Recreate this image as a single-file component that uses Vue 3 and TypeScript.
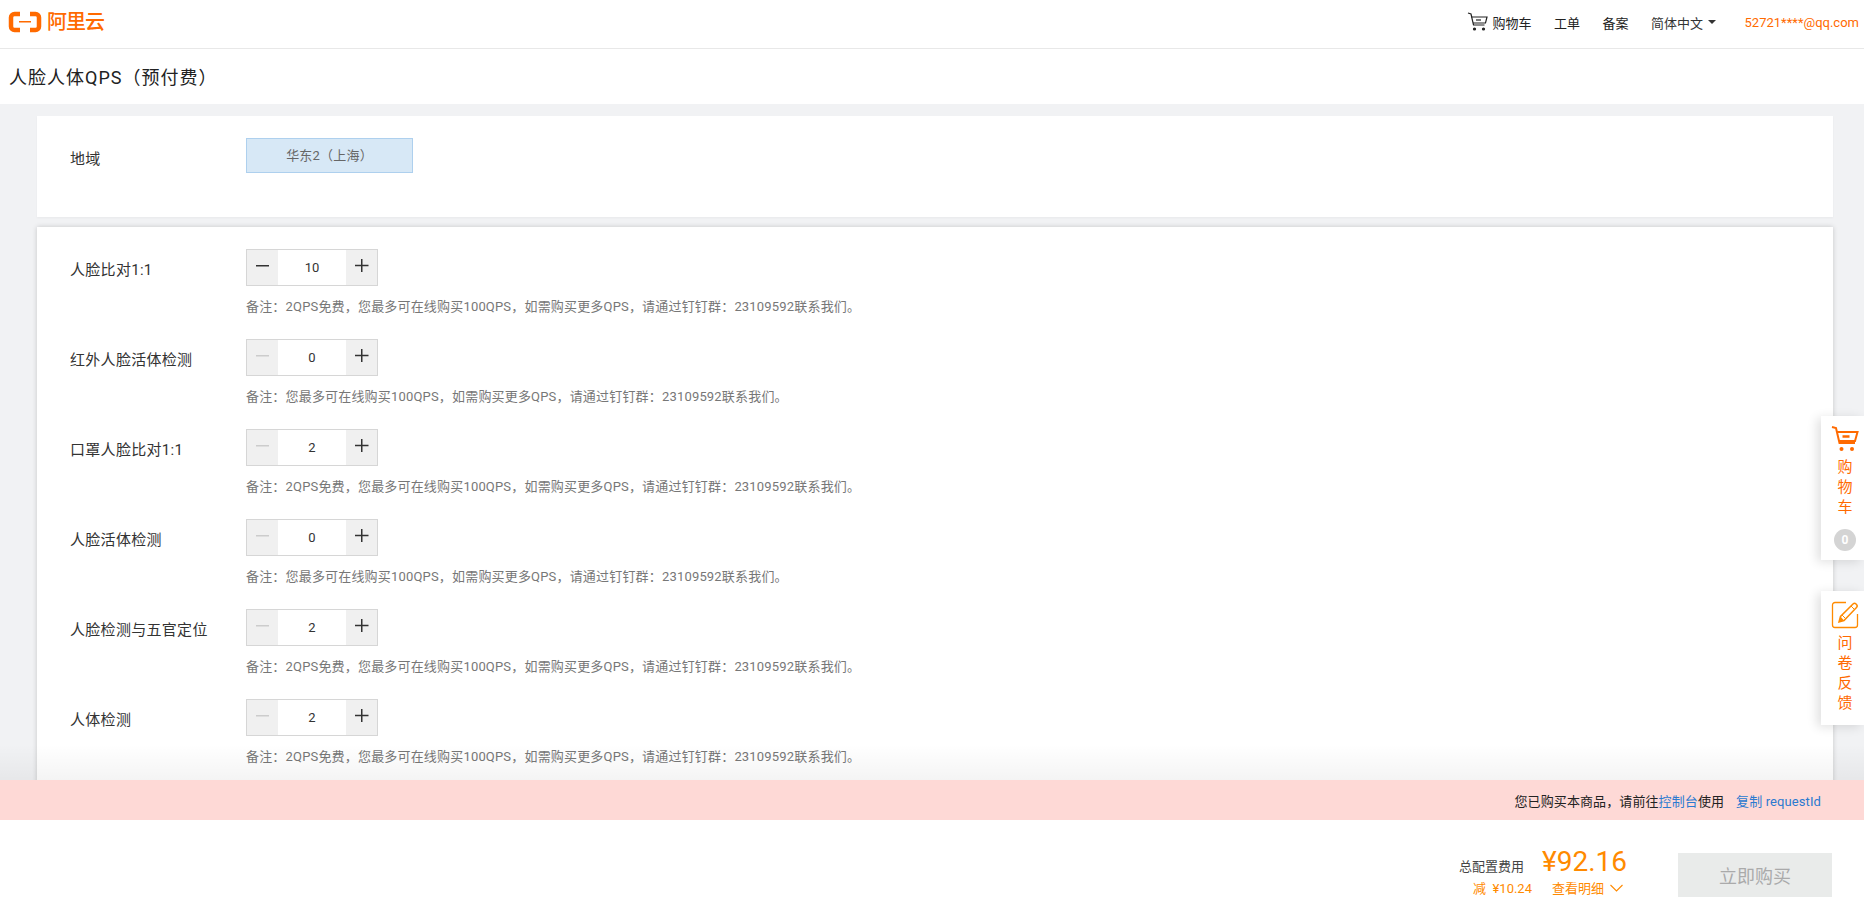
<script setup lang="ts">
interface Row { name: string; value: number; note: string; active?: boolean }
const free = '备注：2QPS免费，您最多可在线购买100QPS，如需购买更多QPS，请通过钉钉群：23109592联系我们。'
const plain = '备注：您最多可在线购买100QPS，如需购买更多QPS，请通过钉钉群：23109592联系我们。'
const rows: Row[] = [
  { name: '人脸比对1:1', value: 10, note: free, active: true },
  { name: '红外人脸活体检测', value: 0, note: plain },
  { name: '口罩人脸比对1:1', value: 2, note: free },
  { name: '人脸活体检测', value: 0, note: plain },
  { name: '人脸检测与五官定位', value: 2, note: free },
  { name: '人体检测', value: 2, note: free },
]
</script>

<template>
  <div class="page">
    <header class="topbar">
      <div class="logo">
        <svg width="34" height="22" viewBox="0 0 34 22">
          <path d="M12 3H6.500C4.500 3 3 4.500 3 6.500v9C3 17.500 4.500 19 6.500 19H12" fill="none" stroke="#ff6a00" stroke-width="4.500"/>
          <path d="M22 3h5.500C29.500 3 31 4.500 31 6.500v9c0 2-1.500 3.500-3.500 3.500H22" fill="none" stroke="#ff6a00" stroke-width="4.500"/>
          <rect x="11" y="10" width="12" height="1.500" fill="#ff6a00"/>
        </svg>
        <span class="logo-text">阿里云</span>
      </div>
      <nav class="nav">
        <span class="nav-cart">
          <svg width="21" height="20" viewBox="0 0 21 20" fill="none" stroke="#222" stroke-width="1.200">
            <path d="M1 1l3 1 2.500 11h11"/>
            <path d="M4.500 5H20l-1.500 6H6"/>
            <path d="M9 8h5"/>
            <circle cx="7.500" cy="17" r="1" fill="#222"/>
            <circle cx="16.500" cy="17" r="1" fill="#222"/>
          </svg>
          购物车
        </span>
        <span>工单</span>
        <span>备案</span>
        <span class="lang">简体中文<i class="caret"></i></span>
        <span class="user">52721****@qq.com</span>
      </nav>
    </header>

    <div class="title">人脸人体QPS（预付费）</div>

    <main class="main">
      <section class="card region">
        <div class="label region-label">地域</div>
        <div class="region-box">华东2（上海）</div>
      </section>
      <section class="card list">
        <div v-for="row in rows" :key="row.name" class="row">
          <div class="label">{{ row.name }}</div>
          <div class="control">
            <div class="stepper">
              <span class="step" :class="{ muted: !row.active }">
                <svg width="14" height="14" viewBox="0 0 14 14"><rect y="6" width="13" height="1.500" fill="currentColor"/></svg>
              </span>
              <span class="num">{{ row.value }}</span>
              <span class="step">
                <svg width="14" height="14" viewBox="0 0 14 14"><path d="M0 6.500h13.500M6.750 0v13" stroke="currentColor" stroke-width="1.500" fill="none"/></svg>
              </span>
            </div>
            <div class="note">{{ row.note }}</div>
          </div>
        </div>
      </section>
      <div class="fade"></div>
    </main>

    <div class="notice">
      <span>您已购买本商品，请前往<a>控制台</a>使用</span>
      <a class="copy">复制 requestId</a>
    </div>

    <footer class="footer">
      <div class="summary">
        <div class="summary-top">
          <span class="total-label">总配置费用</span>
          <span class="price">¥92.16</span>
        </div>
        <div class="summary-bottom">
          <span>减 &nbsp;¥10.24</span>
          <span class="detail">查看明细
            <svg width="13" height="8" viewBox="0 0 13 8"><path d="M.500 1l6 6 6-6" fill="none" stroke="#ff8a00" stroke-width="1.100"/></svg>
          </span>
        </div>
      </div>
      <button class="buy">立即购买</button>
    </footer>

    <aside class="float cart-float">
      <svg width="28" height="28" viewBox="0 0 28 28" fill="none" stroke="#ff6a00" stroke-width="2">
        <path d="M1 2l4 1 3.500 15H24"/>
        <path d="M6 7h20.500L24 16H8"/>
        <path d="M11.500 11.500h7" stroke-width="2.500"/>
        <circle cx="10.500" cy="24" r="2" fill="#ff6a00" stroke="none"/>
        <circle cx="21" cy="24" r="2" fill="#ff6a00" stroke="none"/>
      </svg>
      <div class="float-text">购<br>物<br>车</div>
      <span class="count">0</span>
    </aside>
    <aside class="float survey-float">
      <svg width="28" height="28" viewBox="0 0 28 28" fill="none" stroke="#ff8a00" stroke-width="1.300">
        <path d="M15 1.500H4A2.500 2.500 0 0 0 1.500 4v20A2.500 2.500 0 0 0 4 26.500h20a2.500 2.500 0 0 0 2.500-2.500V13"/>
        <path d="M8 21l1.500-5.500L22 3c1-1 2-1 3 0l.500.500c1 1 1 2 0 3L13 19.500z" stroke-width="1.500"/>
        <path d="M8.200 20.800l1.300-5.300 3.500 4z" fill="#ff8a00" stroke="none"/>
        <path d="M11 14l3.500 3.500M20 5l3.500 3.500" stroke-width="1"/>
      </svg>
      <div class="float-text">问<br>卷<br>反<br>馈</div>
    </aside>
  </div>
</template>

<style>
html, body { margin: 0; }
</style>

<style scoped>
.page {
  position: relative;
  height: 914px;
  overflow: hidden;
  display: flex;
  flex-direction: column;
  background: #fff;
  font-family: Roboto, "Noto Sans CJK SC", sans-serif;
  font-size: 13px;
  color: #333;
}
.topbar {
  height: 48px;
  flex: none;
  border-bottom: 1px solid #e8e8e8;
  display: flex;
  justify-content: space-between;
  align-items: center;
  padding: 0 5px 0 8px;
}
.logo { display: flex; align-items: center; gap: 5px; margin-top: -5px; }
.logo-text { color: #ff6a00; font-size: 20px; font-weight: 500; letter-spacing: -1px; line-height: 22px; }
.nav { display: flex; align-items: center; gap: 22.500px; color: #222; font-size: 13px; }
.nav-cart { display: flex; align-items: center; gap: 5px; margin-top: -4px; }
.nav > span:not(.nav-cart) { margin-top: -4px; }
.lang { color: #333; display: flex; align-items: center; gap: 5px; }
.caret { display: block; width: 0; height: 0; border: 4px solid transparent; border-top: 4px solid #333; border-bottom: 0; }
.user { color: #ff6a00; margin-left: 6px; }
.title {
  height: 55px;
  flex: none;
  line-height: 57px;
  padding-left: 9px;
  font-size: 18px;
  letter-spacing: 1px;
  color: #222;
}
.main {
  position: relative;
  flex: 1;
  min-height: 0;
  overflow: hidden;
  background: #f1f2f4;
  padding: 12px 31px 0 37px;
  display: flex;
  flex-direction: column;
  gap: 10px;
}
.card { background: #fff; flex: none; }
.region { height: 101px; display: flex; padding: 22px 0 0 33px; box-sizing: border-box; box-shadow: 0 1px 2px rgba(0,0,0,.04); }
.label { width: 176px; flex: none; font-size: 15px; letter-spacing: .3px; color: #333; padding-top: 11px; line-height: 20px; }
.region-label { padding-top: 11px; }
.region-box {
  width: 167px;
  height: 35px;
  box-sizing: border-box;
  background: #d7e8f6;
  border: 1px solid #aed0ee;
  text-align: center;
  line-height: 33px;
  font-size: 13px;
  letter-spacing: .2px;
  color: #666;
}
.list {
  padding: 22px 33px 40px;
  box-shadow: 0 0 5px rgba(0,0,0,.18);
  display: flex;
  flex-direction: column;
  gap: 16px;
}
.row { display: flex; height: 74px; }
.stepper {
  width: 132px;
  height: 37px;
  box-sizing: border-box;
  border: 1px solid #d6d6d6;
  display: flex;
}
.step {
  width: 31px;
  flex: none;
  background: #f0f0f0;
  color: #333;
  display: flex;
  align-items: center;
  justify-content: center;
  padding-bottom: 4px;
  box-sizing: border-box;
}
.step.muted { color: #ccc; }
.num { flex: 1; text-align: center; line-height: 35px; font-size: 13px; color: #333; }
.note { margin-top: 12px; font-size: 13px; letter-spacing: .18px; line-height: 18px; color: #777; white-space: nowrap; }
.fade {
  position: absolute;
  left: 0;
  right: 0;
  bottom: 0;
  height: 36px;
  background: linear-gradient(to bottom, rgba(0,0,0,0), rgba(0,0,0,.045));
}
.notice {
  height: 40px;
  flex: none;
  background: #fed9d6;
  display: flex;
  justify-content: flex-end;
  align-items: center;
  gap: 12px;
  padding-right: 43px;
  color: #222;
  font-size: 13px;
  letter-spacing: .1px;
}
.notice a { color: #2b7ad0; }
.footer {
  height: 94px;
  flex: none;
  box-sizing: border-box;
  display: flex;
  justify-content: flex-end;
  align-items: flex-start;
  padding: 33px 32px 0 0;
  gap: 51px;
}
.summary { display: flex; flex-direction: column; align-items: flex-end; margin-top: -9px; }
.summary-top { display: flex; align-items: flex-end; gap: 18px; }
.total-label { font-size: 13px; color: #444; margin-bottom: 5px; }
.price { font-size: 28px; line-height: 36px; color: #ff8a00; }
.summary-bottom { display: flex; gap: 20px; font-size: 13px; color: #ff8a00; margin-top: -2px; margin-right: 4px; }
.detail { display: inline-flex; align-items: center; gap: 6px; }
.buy {
  width: 154px;
  height: 44px;
  border: 0;
  background: #e9ebea;
  color: #aaa;
  font-family: inherit;
  font-size: 18px;
}
.float {
  position: absolute;
  right: 0;
  width: 43px;
  background: #fff;
  box-shadow: -4px 2px 10px rgba(0,0,0,.12);
  display: flex;
  flex-direction: column;
  align-items: center;
  box-sizing: border-box;
  padding: 9px 0 0 5px;
}
.cart-float { top: 416px; height: 144px; }
.survey-float { top: 591px; height: 134px; padding-top: 10px; }
.float-text { font-size: 15px; line-height: 20px; color: #ff6a00; text-align: center; margin-top: 4px; }
.count {
  width: 22px;
  height: 22px;
  border-radius: 50%;
  background: #d4d4d4;
  color: #fff;
  font-weight: 700;
  font-size: 12px;
  line-height: 22px;
  text-align: center;
  margin-top: 12px;
}
</style>
